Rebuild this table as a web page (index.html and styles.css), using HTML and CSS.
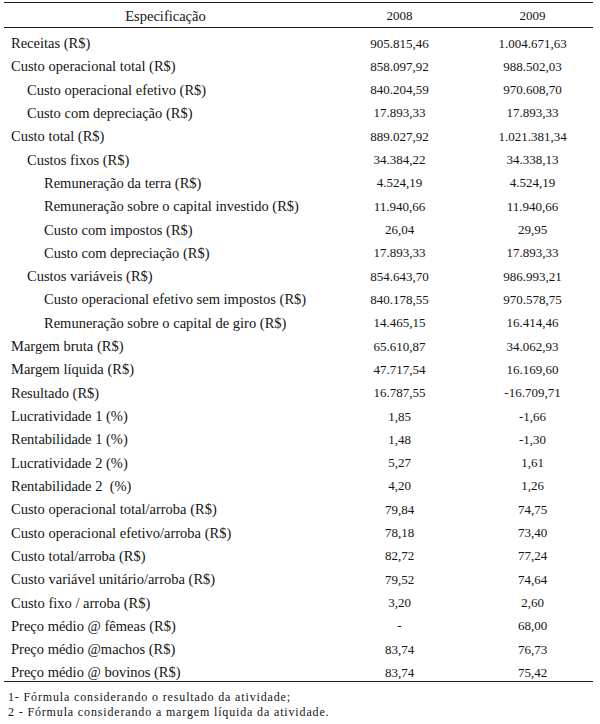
FILE: index.html
```html
<!DOCTYPE html>
<html lang="pt">
<head>
<meta charset="utf-8">
<link rel="stylesheet" href="styles.css">
</head>
<body>
<div class="tbl">
  <div class="row head">
    <div class="c1 center">Especificação</div>
    <div class="c2">2008</div>
    <div class="c3">2009</div>
  </div>
  <div class="body">
    <div class="row"><div class="c1 l0">Receitas (R$)</div><div class="c2">905.815,46</div><div class="c3">1.004.671,63</div></div>
    <div class="row"><div class="c1 l0">Custo operacional total (R$)</div><div class="c2">858.097,92</div><div class="c3">988.502,03</div></div>
    <div class="row"><div class="c1 l1">Custo operacional efetivo (R$)</div><div class="c2">840.204,59</div><div class="c3">970.608,70</div></div>
    <div class="row"><div class="c1 l1">Custo com depreciação (R$)</div><div class="c2">17.893,33</div><div class="c3">17.893,33</div></div>
    <div class="row"><div class="c1 l0">Custo total (R$)</div><div class="c2">889.027,92</div><div class="c3">1.021.381,34</div></div>
    <div class="row"><div class="c1 l1">Custos fixos (R$)</div><div class="c2">34.384,22</div><div class="c3">34.338,13</div></div>
    <div class="row"><div class="c1 l2">Remuneração da terra (R$)</div><div class="c2">4.524,19</div><div class="c3">4.524,19</div></div>
    <div class="row"><div class="c1 l2">Remuneração sobre o capital investido (R$)</div><div class="c2">11.940,66</div><div class="c3">11.940,66</div></div>
    <div class="row"><div class="c1 l2">Custo com impostos (R$)</div><div class="c2">26,04</div><div class="c3">29,95</div></div>
    <div class="row"><div class="c1 l2">Custo com depreciação (R$)</div><div class="c2">17.893,33</div><div class="c3">17.893,33</div></div>
    <div class="row"><div class="c1 l1">Custos variáveis (R$)</div><div class="c2">854.643,70</div><div class="c3">986.993,21</div></div>
    <div class="row"><div class="c1 l2">Custo operacional efetivo sem impostos (R$)</div><div class="c2">840.178,55</div><div class="c3">970.578,75</div></div>
    <div class="row"><div class="c1 l2">Remuneração sobre o capital de giro (R$)</div><div class="c2">14.465,15</div><div class="c3">16.414,46</div></div>
    <div class="row"><div class="c1 l0">Margem bruta (R$)</div><div class="c2">65.610,87</div><div class="c3">34.062,93</div></div>
    <div class="row"><div class="c1 l0">Margem líquida (R$)</div><div class="c2">47.717,54</div><div class="c3">16.169,60</div></div>
    <div class="row"><div class="c1 l0">Resultado (R$)</div><div class="c2">16.787,55</div><div class="c3">-16.709,71</div></div>
    <div class="row"><div class="c1 l0">Lucratividade 1 (%)</div><div class="c2">1,85</div><div class="c3">-1,66</div></div>
    <div class="row"><div class="c1 l0">Rentabilidade 1 (%)</div><div class="c2">1,48</div><div class="c3">-1,30</div></div>
    <div class="row"><div class="c1 l0">Lucratividade 2 (%)</div><div class="c2">5,27</div><div class="c3">1,61</div></div>
    <div class="row"><div class="c1 l0">Rentabilidade 2 &nbsp;(%)</div><div class="c2">4,20</div><div class="c3">1,26</div></div>
    <div class="row"><div class="c1 l0">Custo operacional total/arroba (R$)</div><div class="c2">79,84</div><div class="c3">74,75</div></div>
    <div class="row"><div class="c1 l0">Custo operacional efetivo/arroba (R$)</div><div class="c2">78,18</div><div class="c3">73,40</div></div>
    <div class="row"><div class="c1 l0">Custo total/arroba (R$)</div><div class="c2">82,72</div><div class="c3">77,24</div></div>
    <div class="row"><div class="c1 l0">Custo variável unitário/arroba (R$)</div><div class="c2">79,52</div><div class="c3">74,64</div></div>
    <div class="row"><div class="c1 l0">Custo fixo / arroba (R$)</div><div class="c2">3,20</div><div class="c3">2,60</div></div>
    <div class="row"><div class="c1 l0">Preço médio @ fêmeas (R$)</div><div class="c2">-</div><div class="c3">68,00</div></div>
    <div class="row"><div class="c1 l0">Preço médio @machos (R$)</div><div class="c2">83,74</div><div class="c3">76,73</div></div>
    <div class="row"><div class="c1 l0">Preço médio @ bovinos (R$)</div><div class="c2">83,74</div><div class="c3">75,42</div></div>
  </div>
</div>
<div class="notes">
  <div>1- Fórmula considerando o resultado da atividade;</div>
  <div>2 - Fórmula considerando a margem líquida da atividade.</div>
</div>
</body>
</html>
```
FILE: styles.css
```css
html, body {
  margin: 0;
  padding: 0;
  background: #ffffff;
}
body {
  font-family: "Liberation Serif", "DejaVu Serif", serif;
  font-size: 13px;
  color: #141414;
}
.tbl {
  margin: 2px 0 0 4px;
  width: 589px;
  border-top: 1.5px solid #1e1e1e;
  border-bottom: 1.5px solid #1e1e1e;
}
.row {
  display: grid;
  grid-template-columns: 323px 145px 121px;
  height: 23.32px;
  align-items: center;
  padding-top: 7px;
  box-sizing: border-box;
}
.row.head {
  height: 25px;
  padding-top: 2px;
  border-bottom: 1.5px solid #1e1e1e;
}
.c1 {
  font-size: 14.5px;
  white-space: nowrap;
}
.c2, .c3, .center {
  text-align: center;
}
.l0 { padding-left: 7px; }
.l1 { padding-left: 23px; }
.l2 { padding-left: 40px; }
.notes {
  margin: 8px 0 0 8px;
  font-size: 12px;
  line-height: 15px;
  letter-spacing: 0.85px;
}
```
